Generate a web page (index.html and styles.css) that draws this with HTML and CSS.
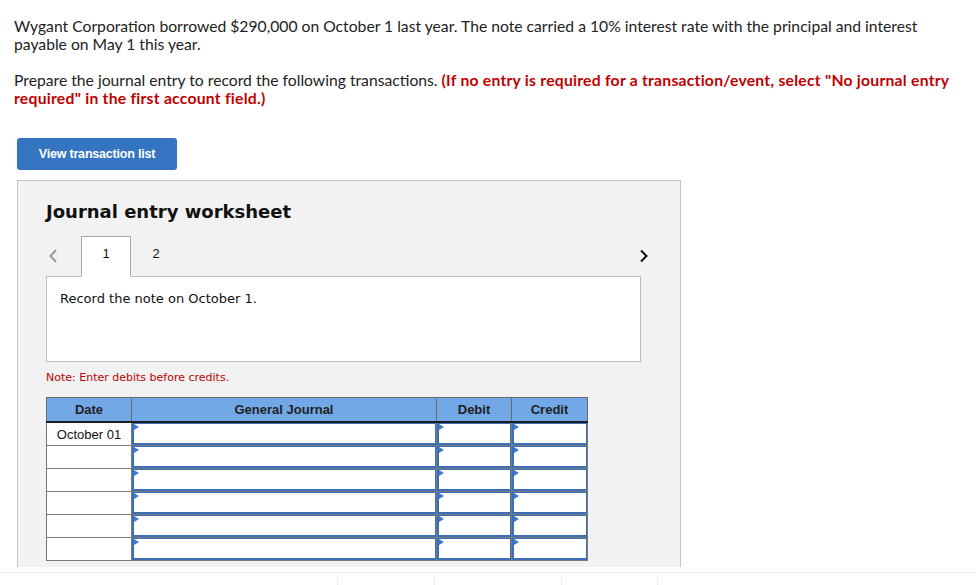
FILE: index.html
```html
<!DOCTYPE html>
<html>
<head>
<meta charset="utf-8">
<link rel="stylesheet" href="styles.css">
</head>
<body>
<div class="intro">
  <p>Wygant Corporation borrowed $290,000 on October 1 last year. The note carried a 10% interest rate with the principal and interest payable on May 1 this year.</p>
  <p>Prepare the journal entry to record the following transactions. <strong class="warn">(If no entry is required for a transaction/event, select "No journal entry required" in the first account field.)</strong></p>
</div>
<button class="btn">View transaction list</button>
<div class="panel">
  <h2 class="title">Journal entry worksheet</h2>
  <div class="tabs">
    <span class="arrow prev"><svg width="10" height="16" viewBox="0 0 10 16"><path d="M8 2 L2.5 8 L8 14" fill="none" stroke="#9a9a9a" stroke-width="2"/></svg></span>
    <span class="tab active">1</span>
    <span class="tab">2</span>
    <span class="spacer"></span>
    <span class="arrow next"><svg width="10" height="16" viewBox="0 0 10 16"><path d="M2 2.5 L7.5 8 L2 13.5" fill="none" stroke="#111" stroke-width="2"/></svg></span>
  </div>
  <div class="desc">Record the note on October 1.</div>
  <div class="note">Note: Enter debits before credits.</div>
  <table class="journal">
    <colgroup><col class="c-date"><col class="c-gj"><col class="c-num"><col class="c-num2"></colgroup>
    <thead>
      <tr><th>Date</th><th>General Journal</th><th>Debit</th><th>Credit</th></tr>
    </thead>
    <tbody>
      <tr><td class="date">October 01</td><td><div class="inp"></div></td><td><div class="inp"></div></td><td><div class="inp"></div></td></tr>
      <tr><td class="date"></td><td><div class="inp"></div></td><td><div class="inp"></div></td><td><div class="inp"></div></td></tr>
      <tr><td class="date"></td><td><div class="inp"></div></td><td><div class="inp"></div></td><td><div class="inp"></div></td></tr>
      <tr><td class="date"></td><td><div class="inp"></div></td><td><div class="inp"></div></td><td><div class="inp"></div></td></tr>
      <tr><td class="date"></td><td><div class="inp"></div></td><td><div class="inp"></div></td><td><div class="inp"></div></td></tr>
      <tr><td class="date"></td><td><div class="inp"></div></td><td><div class="inp"></div></td><td><div class="inp"></div></td></tr>
    </tbody>
  </table>
</div>
<div class="footer">
  <span class="f1"></span><span class="f2"></span><span class="f3"></span><span class="f4"></span><span class="f5"></span>
</div>
</body>
</html>
```

FILE: styles.css
```css
html, body {
  margin: 0;
  padding: 0;
  background: #fff;
}
body {
  font-family: "Lato", "Open Sans", sans-serif;
  color: #222;
  overflow: hidden;
  height: 585px;
}
.intro {
  padding: 17px 20px 0 14px;
  font-size: 15.7px;
  line-height: 18px;
}
.intro p {
  margin: 0 0 18px 0;
}
.warn {
  color: #c00000;
  font-weight: bold;
  letter-spacing: 0.25px;
}
.btn {
  display: block;
  margin: 31px 0 0 17px;
  width: 160px;
  height: 32px;
  border: none;
  border-radius: 3px;
  background: #3474c1;
  color: #fff;
  font-family: "Liberation Sans", Arial, sans-serif;
  font-weight: bold;
  font-size: 12.5px;
  letter-spacing: -0.2px;
  padding: 0;
}
.panel {
  margin: 10px 0 0 17px;
  width: 664px;
  box-sizing: border-box;
  background: #f2f2f2;
  border: 1px solid #c4c4c4;
  border-bottom: none;
  padding: 20px 39px 6px 28px;
  font-family: "DejaVu Sans", Verdana, sans-serif;
}
.title {
  margin: 0;
  font-size: 18px;
  line-height: 22px;
  font-weight: bold;
  color: #111;
}
.tabs {
  display: flex;
  align-items: stretch;
  margin: 13px -8px 0 0;
  height: 40px;
}
.arrow {
  display: flex;
  align-items: center;
}
.prev {
  width: 35px;
  padding-left: 2px;
  box-sizing: border-box;
}
.next {
  width: 10px;
}
.spacer {
  flex: 1;
}
.tab {
  width: 50px;
  display: flex;
  align-items: center;
  justify-content: center;
  font-family: "Liberation Sans", Arial, sans-serif;
  font-size: 13px;
  color: #111;
  padding-bottom: 6px;
  box-sizing: border-box;
}
.tab.active {
  background: #fff;
  border: 1px solid #a8a8a8;
  border-bottom: 1px solid #fff;
  margin-bottom: -1px;
  height: 41px;
  position: relative;
  z-index: 1;
}
.desc {
  background: #fff;
  border: 1px solid #bcbcbc;
  height: 86px;
  box-sizing: border-box;
  padding: 14px 13px;
  font-size: 13px;
  line-height: 16px;
  color: #111;
}
.note {
  margin-top: 9px;
  font-size: 11px;
  line-height: 14px;
  color: #c00000;
}
.journal {
  margin-top: 12px;
  border-collapse: collapse;
  width: 541px;
  table-layout: fixed;
  font-family: "Liberation Sans", Arial, sans-serif;
  font-size: 13px;
}
.c-date { width: 85px; }
.c-gj { width: 305px; }
.c-num { width: 75px; }
.c-num2 { width: 76px; }
.journal th {
  background: #72a8e6;
  border: 1px solid #6a6a6a;
  border-bottom: 2px solid #1e1e1e;
  height: 23px;
  padding: 0;
  font-weight: bold;
  color: #222;
}
.journal td {
  border: 1px solid #7a7a7a;
  height: 22px;
  padding: 0;
  background: #fff;
}
.journal td.date {
  text-align: center;
  color: #111;
}
.inp {
  position: relative;
  height: 22px;
  box-sizing: border-box;
  border: 1px solid #3c6fb5;
  border-left-width: 2px;
  border-bottom-width: 2px;
  background: #fff;
}
.inp::before {
  content: "";
  position: absolute;
  left: 0;
  top: 0;
  border-top: 3px solid transparent;
  border-bottom: 3px solid transparent;
  border-left: 5px solid #3b7ad6;
}
.footer {
  margin-top: 5px;
  border-top: 1px solid #ececec;
  display: flex;
  padding-top: 5px;
  height: 20px;
}
.footer span {
  height: 20px;
  border-left: 1px solid #e8e8e8;
}
.footer .f1 { width: 337px; border-left: none; }
.footer .f2 { width: 96px; }
.footer .f3 { width: 126px; }
.footer .f4 { width: 95px; }
.footer .f5 { flex: 1; }
```
